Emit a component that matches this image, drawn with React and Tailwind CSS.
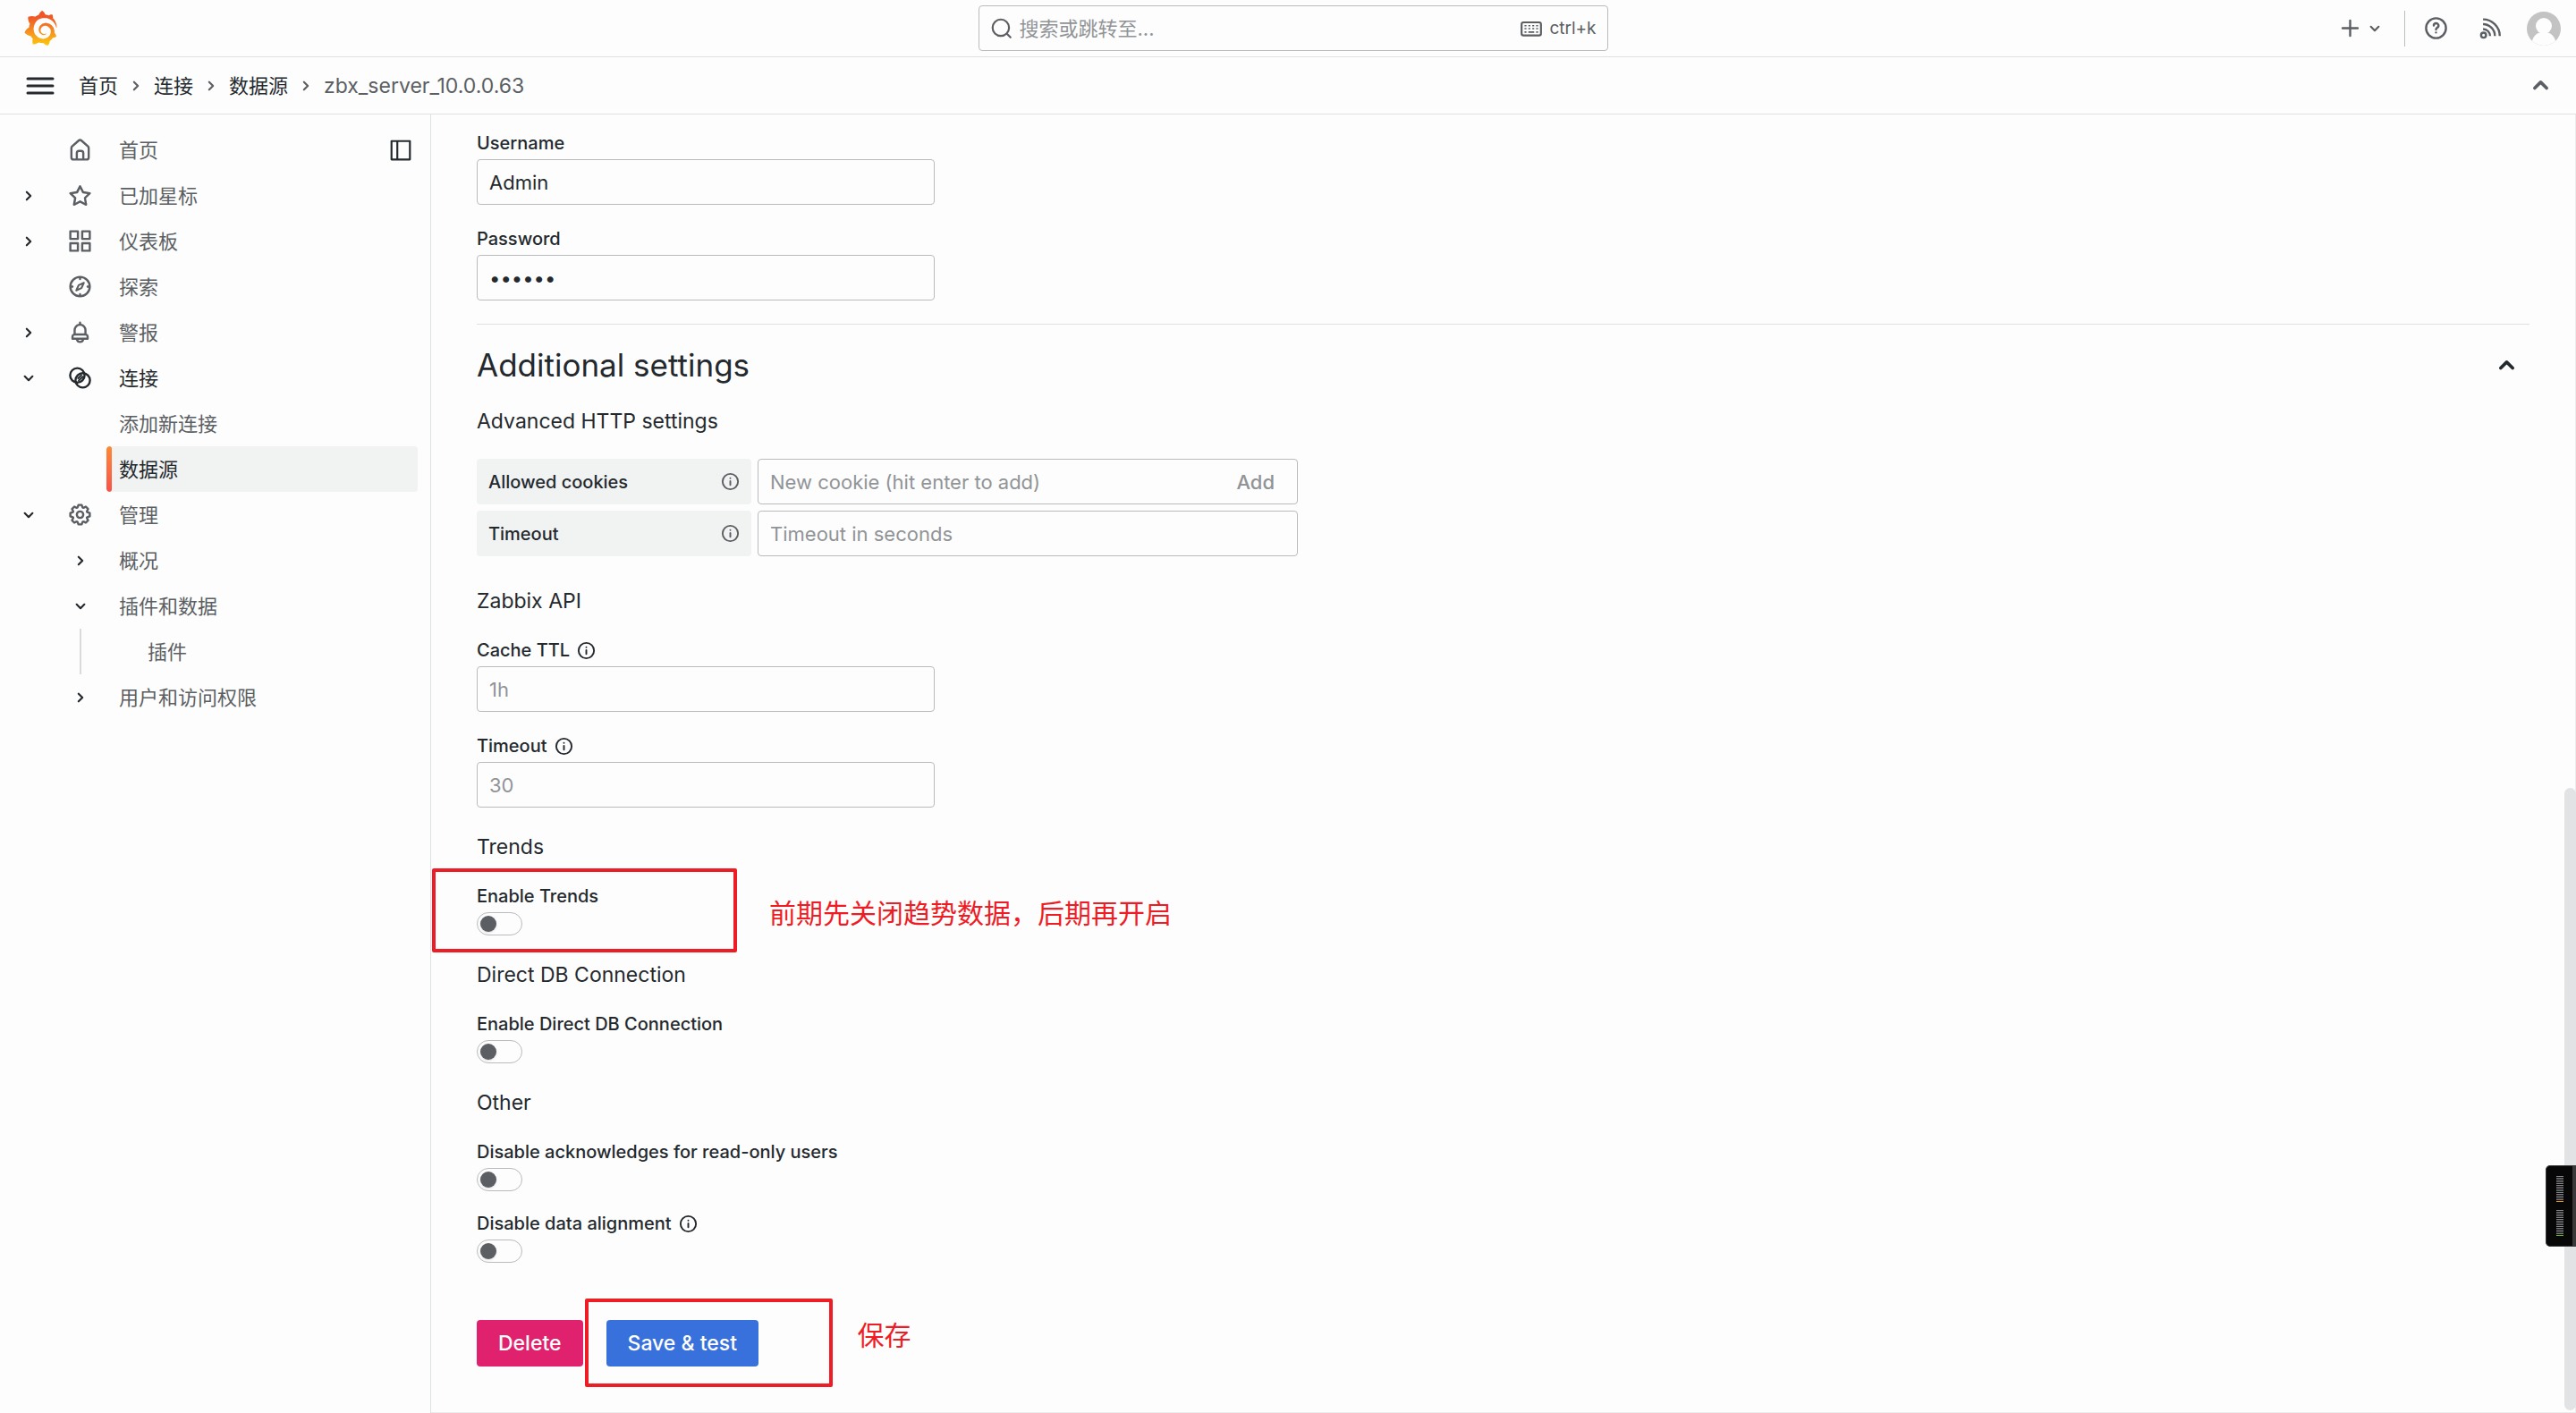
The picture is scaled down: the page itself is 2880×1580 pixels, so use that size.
import React from "react";
import { SiGrafana } from "react-icons/si";

const PATHS = {
  home: "M20,8h0L14,2.74a3,3,0,0,0-4,0L4,8a3,3,0,0,0-1,2.26V19a3,3,0,0,0,3,3H18a3,3,0,0,0,3-3V10.25A3,3,0,0,0,20,8ZM14,20H10V15a1,1,0,0,1,1-1h2a1,1,0,0,1,1,1Zm5-1a1,1,0,0,1-1,1H16V15a3,3,0,0,0-3-3H11a3,3,0,0,0-3,3v5H6a1,1,0,0,1-1-1V10.25a1,1,0,0,1,.34-.75l6-5.25a1,1,0,0,1,1.32,0l6,5.25a1,1,0,0,1,.34.75Z",
  star: "M22,9.67A1,1,0,0,0,21.14,9l-5.69-.83L12.9,3a1,1,0,0,0-1.8,0L8.55,8.16,2.86,9a1,1,0,0,0-.81.68,1,1,0,0,0,.25,1l4.13,4-1,5.68A1,1,0,0,0,6.9,21.44L12,18.77l5.1,2.67a.93.93,0,0,0,.46.12,1,1,0,0,0,.59-.19,1,1,0,0,0,.4-1l-1-5.68,4.13-4A1,1,0,0,0,22,9.67Zm-6.15,4a1,1,0,0,0-.29.88l.72,4.2-3.76-2a1.06,1.06,0,0,0-.94,0l-3.76,2,.72-4.2a1,1,0,0,0-.29-.88l-3-3,4.21-.61a1,1,0,0,0,.76-.55L12,5.7l1.88,3.82a1,1,0,0,0,.76.55l4.21.61Z",
  apps: "M10,13H3a1,1,0,0,0-1,1v7a1,1,0,0,0,1,1h7a1,1,0,0,0,1-1V14A1,1,0,0,0,10,13ZM9,20H4V15H9ZM21,2H14a1,1,0,0,0-1,1v7a1,1,0,0,0,1,1h7a1,1,0,0,0,1-1V3A1,1,0,0,0,21,2ZM20,9H15V4h5Zm1,4H14a1,1,0,0,0-1,1v7a1,1,0,0,0,1,1h7a1,1,0,0,0,1-1V14A1,1,0,0,0,21,13Zm-1,7H15V15h5ZM10,2H3A1,1,0,0,0,2,3v7a1,1,0,0,0,1,1h7a1,1,0,0,0,1-1V3A1,1,0,0,0,10,2ZM9,9H4V4H9Z",
  bell: "M18,13.18V10a6,6,0,0,0-5-5.91V3a1,1,0,0,0-2,0V4.09A6,6,0,0,0,6,10v3.18A3,3,0,0,0,4,16v2a1,1,0,0,0,1,1H8.14a4,4,0,0,0,7.72,0H19a1,1,0,0,0,1-1V16A3,3,0,0,0,18,13.18ZM8,10a4,4,0,0,1,8,0v3H8Zm4,10a2,2,0,0,1-1.72-1h3.44A2,2,0,0,1,12,20Zm6-3H6V16a1,1,0,0,1,1-1H17a1,1,0,0,1,1,1Z",
  cog: "M21.32,9.55l-1.89-.63.89-1.78A1,1,0,0,0,20.13,6L18,3.87a1,1,0,0,0-1.15-.19l-1.78.89-.63-1.89A1,1,0,0,0,13.5,2h-3a1,1,0,0,0-.95.68L8.92,4.57,7.14,3.68A1,1,0,0,0,6,3.87L3.87,6a1,1,0,0,0-.19,1.15l.89,1.78-1.89.63A1,1,0,0,0,2,10.5v3a1,1,0,0,0,.68.95l1.89.63-.89,1.78A1,1,0,0,0,3.87,18L6,20.13a1,1,0,0,0,1.15.19l1.78-.89.63,1.89a1,1,0,0,0,.95.68h3a1,1,0,0,0,.95-.68l.63-1.89,1.78.89A1,1,0,0,0,18,20.13L20.13,18a1,1,0,0,0,.19-1.15l-.89-1.78,1.89-.63A1,1,0,0,0,22,13.5v-3A1,1,0,0,0,21.32,9.55ZM20,12.78l-1.2.4A2,2,0,0,0,17.64,16l.57,1.14-1.1,1.1L16,17.64a2,2,0,0,0-2.79,1.16l-.4,1.2H11.22l-.4-1.2A2,2,0,0,0,8,17.64l-1.14.57-1.1-1.1L6.36,16A2,2,0,0,0,5.2,13.18L4,12.78V11.22l1.2-.4A2,2,0,0,0,6.36,8L5.79,6.89l1.1-1.1L8,6.36A2,2,0,0,0,10.82,5.2l.4-1.2h1.56l.4,1.2A2,2,0,0,0,16,6.36l1.14-.57,1.1,1.1L17.64,8a2,2,0,0,0,1.16,2.79l1.2.4ZM12,8a4,4,0,1,0,4,4A4,4,0,0,0,12,8Zm0,6a2,2,0,1,1,2-2A2,2,0,0,1,12,14Z",
};

function Solid({ name }) {
  return (
    <svg viewBox="0 0 24 24" className="size-[29px]" fill="currentColor" aria-hidden="true">
      <path d={PATHS[name]} />
    </svg>
  );
}

function Stroke({ children, className = "size-[29px]", width = 2 }) {
  return (
    <svg
      viewBox="0 0 24 24"
      className={className}
      fill="none"
      stroke="currentColor"
      strokeWidth={width}
      strokeLinecap="round"
      strokeLinejoin="round"
      aria-hidden="true"
    >
      {children}
    </svg>
  );
}

const ICONS = {
  home: <Solid name="home" />,
  star: <Solid name="star" />,
  apps: <Solid name="apps" />,
  bell: <Solid name="bell" />,
  cog: <Solid name="cog" />,
  compass: (
    <Stroke>
      <circle cx="12" cy="12" r="9" />
      <path d="M12 3.5v1.5M12 19v1.5M3.5 12H5M19 12h1.500" />
      <path d="M15.500 8.500l-4.800 2.200-2.200 4.800 4.800-2.200z" strokeWidth="1.700" />
    </Stroke>
  ),
  connections: (
    <Stroke>
      <circle cx="9.500" cy="9.700" r="6.700" />
      <circle cx="14.500" cy="14.300" r="6.700" />
      <path d="M10.200 12.400l3-2.800M10.800 14.400l3.800-3.400" strokeWidth="1.600" />
    </Stroke>
  ),
};

const CHEVRONS = {
  right: "M10 8l4 4-4 4",
  down: "M8 10l4 4 4-4",
};

function Chevron({ dir }) {
  return (
    <Stroke className="size-[26px]">
      <path d={CHEVRONS[dir]} />
    </Stroke>
  );
}

function ChevronUp() {
  return (
    <Stroke className="size-[29px]" width={3}>
      <path d="M6.500 14.500L12 9l5.500 5.500" />
    </Stroke>
  );
}

function Info() {
  return (
    <Stroke className="size-[23px] shrink-0">
      <circle cx="12" cy="12" r="9" />
      <path d="M12 11.500v4.500M12 8v.01" />
    </Stroke>
  );
}

function TopBar() {
  return (
    <header className="flex h-16 shrink-0 items-center border-b border-[#dfe0e1] pr-[17px] pl-7">
      <div className="flex flex-1 items-center">
        <a href="#home" aria-label="Grafana">
          <svg className="absolute size-0" aria-hidden="true">
            <defs>
              <linearGradient id="flame" x1="0" y1="1" x2="0" y2="0">
                <stop offset="0" stopColor="#fcc80b" />
                <stop offset="0.45" stopColor="#f58a22" />
                <stop offset="0.8" stopColor="#ef5a28" />
                <stop offset="1" stopColor="#ef5028" />
              </linearGradient>
            </defs>
          </svg>
          <SiGrafana fill="url(#flame)" className="size-[39px] -ml-0.5" />
        </a>
      </div>
      <div className="flex h-[51px] w-[704px] items-center gap-[7px] rounded border border-[#b9bbbc] px-3 focus-within:border-[#3871dc]">
        <svg viewBox="0 0 24 24" className="size-[26px] shrink-0" fill="none" stroke="currentColor" strokeWidth="2" strokeLinecap="round" aria-hidden="true">
          <circle cx="11" cy="11" r="8.500" />
          <path d="M17.500 17.500l3.500 3.500" />
        </svg>
        <input
          type="text"
          aria-label="搜索或跳转至..."
          placeholder="搜索或跳转至..."
          className="min-w-0 flex-1 bg-transparent outline-none placeholder:text-[#919497]"
        />
        <svg viewBox="0 0 24 24" className="size-[26px] shrink-0" fill="none" stroke="currentColor" strokeWidth="2" aria-hidden="true">
          <rect x="2" y="5.500" width="20" height="13.500" rx="2" />
          <path d="M5 9h2M9 9h2M13 9h2M17 9h2M5 12h2M9 12h2M13 12h2M17 12h2M5 15.500h2M9 15.500h6M17 15.500h2" strokeWidth="1.600" />
        </svg>
        <span className="text-[19px]">ctrl+k</span>
      </div>
      <div className="flex flex-1 items-center justify-end">
        <button type="button" aria-label="新建" className="flex items-center">
          <Stroke>
            <path d="M12 5v14M5 12h14" />
          </Stroke>
          <Chevron dir="down" />
        </button>
        <div className="mx-5 h-10 w-px bg-[#bbbdbe]" />
        <button type="button" aria-label="帮助" className="mr-8">
          <Stroke>
            <circle cx="12" cy="12" r="9.200" />
            <path d="M9.900 9.600a2.200 2.200 0 1 1 3.300 1.900c-.8.500-1.200.8-1.200 1.700M12 16v.01" />
          </Stroke>
        </button>
        <button type="button" aria-label="新闻" className="mr-[26px]">
          <Stroke>
            <circle cx="5.500" cy="18.500" r="2.300" />
            <g strokeLinecap="butt">
              <path d="M5 12.800c3.600 0 6.500 2.900 6.500 6.500M5 8.300c6 0 11 5 11 11M5 3.800c8.500 0 15.500 7 15.500 15.500" />
            </g>
          </Stroke>
        </button>
        <button type="button" aria-label="个人资料">
          <svg viewBox="0 0 38 38" className="size-[38px]" aria-hidden="true">
            <defs>
              <clipPath id="avatar">
                <circle cx="19" cy="19" r="19" />
              </clipPath>
            </defs>
            <g clipPath="url(#avatar)">
              <rect width="38" height="38" fill="#c3c3c3" />
              <circle cx="19" cy="16" r="9" fill="#fdfdfd" />
              <path d="M5 38C6 27 11 23 19 23s13 4 14 15z" fill="#fdfdfd" />
            </g>
          </svg>
        </button>
      </div>
    </header>
  );
}

function Breadcrumbs() {
  return (
    <div className="flex h-16 shrink-0 items-center border-b border-[#dfe0e1] pr-[25px] pl-7">
      <button type="button" aria-label="菜单" className="mr-[26px] text-[#24292e]">
        <svg viewBox="0 0 34 24" className="h-6 w-[34px]" stroke="currentColor" strokeWidth="3" strokeLinecap="round" aria-hidden="true">
          <path d="M3 4h28M3 12h28M3 20h28" />
        </svg>
      </button>
      <nav aria-label="breadcrumb" className="flex flex-1 items-center gap-[7px]">
        {["首页", "连接", "数据源"].map((t) => (
          <React.Fragment key={t}>
            <a href={"#" + t} className="text-[#24292e]">{t}</a>
            <Chevron dir="right" />
          </React.Fragment>
        ))}
        <span className="text-[23px]">zbx_server_10.0.0.63</span>
      </nav>
      <button type="button" aria-label="收起">
        <ChevronUp />
      </button>
    </div>
  );
}

const NAV = [
  { label: "首页", icon: "home", dock: true },
  { label: "已加星标", icon: "star", outer: "right" },
  { label: "仪表板", icon: "apps", outer: "right" },
  { label: "探索", icon: "compass" },
  { label: "警报", icon: "bell", outer: "right" },
  { label: "连接", icon: "connections", outer: "down", dark: true },
  { label: "添加新连接" },
  { label: "数据源", active: true, dark: true },
  { label: "管理", icon: "cog", outer: "down" },
  { label: "概况", inner: "right" },
  { label: "插件和数据", inner: "down" },
  { label: "插件", nested: true },
  { label: "用户和访问权限", inner: "right" },
];

function Toggle({ dir, label }) {
  return (
    <button type="button" aria-label={label} className="text-[#24292e]">
      <Chevron dir={dir} />
    </button>
  );
}

function NavItem({ item }) {
  return (
    <li className={item.dark ? "flex h-[51px] items-center text-[#24292e]" : "flex h-[51px] items-center"}>
      <div className="flex w-16 justify-center">
        {item.outer && <Toggle dir={item.outer} label={"展开 " + item.label} />}
      </div>
      <div className="flex h-full w-[51px] items-center justify-center">
        {item.icon && ICONS[item.icon]}
        {item.inner && <Toggle dir={item.inner} label={"展开 " + item.label} />}
        {item.nested && <div className="h-full w-0.5 bg-[#d9dadb]" />}
      </div>
      <div
        className={
          item.active
            ? "ml-1 flex h-full flex-1 items-center overflow-hidden rounded-[4px] bg-[#f1f3f3]"
            : "ml-1 flex h-full flex-1 items-center"
        }
      >
        {item.active ? (
          <div className="mr-2 h-full w-1.5 rounded-[3px] bg-linear-to-b from-[#ff8833] to-[#f8504a]" />
        ) : (
          <div className={item.nested ? "w-[46px]" : "w-3.5"} />
        )}
        <a href={"#" + item.label} className="flex-1">{item.label}</a>
        {item.dock && (
          <button type="button" aria-label="停靠菜单" className="mr-1.5 text-[#24292e]">
            <Stroke className="size-[26px]">
              <path d="M2.500 2.500h19v19h-19zM8.500 2.500v19" />
            </Stroke>
          </button>
        )}
      </div>
    </li>
  );
}

function Sidebar() {
  return (
    <nav className="w-[482px] shrink-0 border-r border-[#dfe0e1] pt-3.5 pr-3.5">
      <ul>
        {NAV.map((item) => (
          <NavItem key={item.label} item={item} />
        ))}
      </ul>
    </nav>
  );
}

function Label({ id, children, info }) {
  return (
    <div className="flex h-6 items-center gap-[7px]">
      <label htmlFor={id} className="text-[20px] leading-6 font-medium">{children}</label>
      {info && <Info />}
    </div>
  );
}

function TextField({ id, label, info, ...rest }) {
  return (
    <div className="flex flex-col gap-1.5">
      <Label id={id} info={info}>{label}</Label>
      <input
        id={id}
        className="h-[51px] w-[512px] rounded-[4px] border border-[#b9bbbc] bg-transparent px-[13px] outline-none placeholder:text-[#919497] focus:border-[#3871dc]"
        {...rest}
      />
    </div>
  );
}

function SwitchField({ id, label, info, children }) {
  return (
    <div className="relative flex flex-col gap-1.5">
      <Label id={id} info={info}>{label}</Label>
      <input
        id={id}
        type="checkbox"
        role="switch"
        className="h-[26px] w-[51px] appearance-none rounded-full border border-[#b9bbbc] p-[3px] before:block before:size-[18px] before:rounded-full before:bg-[#5b5f63] before:shadow-sm before:content-[''] checked:bg-[#3871dc] checked:before:ml-[25px] checked:before:bg-white"
      />
      {children}
    </div>
  );
}

function InlineRow({ id, label, placeholder, action }) {
  return (
    <div className="flex h-[51px] gap-[7px]">
      <div className="flex w-[307px] items-center justify-between rounded-[4px] bg-[#f1f3f3] pr-3 pl-[13px]">
        <label htmlFor={id} className="text-[20px] leading-6 font-medium">{label}</label>
        <span className="text-[#5b5f63]">
          <Info />
        </span>
      </div>
      <div className="flex w-[604px] items-center rounded-[4px] border border-[#b9bbbc] px-[13px] focus-within:border-[#3871dc]">
        <input id={id} placeholder={placeholder} className="min-w-0 flex-1 bg-transparent outline-none placeholder:text-[#919497]" />
        {action && <button type="button" className="px-3 font-medium text-[#919497]">{action}</button>}
      </div>
    </div>
  );
}

function Section({ title, children, tight }) {
  return (
    <section>
      <h4 className="text-[23px] leading-7">{title}</h4>
      <div className={tight ? "mt-[29px] flex flex-col gap-6" : "mt-[29px] flex flex-col gap-[26px]"}>{children}</div>
    </section>
  );
}

function Settings() {
  return (
    <main className="min-w-0 flex-1 border-r border-b border-[#ececed] pt-5 pr-[51px] pl-[51px] text-[#24292e]">
      <form onSubmit={(e) => e.preventDefault()}>
        <div className="flex flex-col gap-[26px]">
          <TextField id="username" label="Username" type="text" defaultValue="Admin" />
          <TextField id="password" label="Password" type="password" defaultValue="zabbix" autoComplete="off" />
        </div>
        <div className="mt-[26px] flex items-center justify-between border-t border-[#dfe0e1] pt-[25px] pr-[11px]">
          <h3 className="text-[35px] leading-10">Additional settings</h3>
          <button type="button" aria-label="Collapse additional settings">
            <ChevronUp />
          </button>
        </div>
        <h4 className="mt-[29px] text-[23px] leading-7">Advanced HTTP settings</h4>
        <div className="mt-7 flex flex-col gap-[7px]">
          <InlineRow id="cookies" label="Allowed cookies" placeholder="New cookie (hit enter to add)" action="Add" />
          <InlineRow id="http-timeout" label="Timeout" placeholder="Timeout in seconds" />
        </div>
        <div className="mt-9 flex flex-col gap-[30px]">
          <Section title="Zabbix API">
            <TextField id="ttl" label="Cache TTL" info placeholder="1h" />
            <TextField id="api-timeout" label="Timeout" info placeholder="30" />
          </Section>
          <Section title="Trends" tight>
            <SwitchField id="trends" label="Enable Trends">
              <div className="pointer-events-none absolute -top-[19px] -left-[50px] h-[94px] w-[341px] rounded-[2px] border-4 border-[#ee1c25]" />
              <p className="absolute top-[11px] left-[327px] text-[30px] leading-10 whitespace-nowrap text-[#ee1c25]">
                前期先关闭趋势数据，后期再开启
              </p>
            </SwitchField>
          </Section>
          <Section title="Direct DB Connection" tight>
            <SwitchField id="direct-db" label="Enable Direct DB Connection" />
          </Section>
          <Section title="Other" tight>
            <SwitchField id="ack" label="Disable acknowledges for read-only users" />
            <SwitchField id="align" label="Disable data alignment" info />
          </Section>
        </div>
        <div className="mt-16 flex gap-[26px] text-[23px] font-medium text-white">
          <button type="button" className="h-[52px] rounded-[4px] bg-[#e0226e] px-6">Delete</button>
          <div className="relative">
            <button type="submit" className="h-[52px] rounded-[4px] bg-[#3871dc] px-6">Save &amp; test</button>
            <div className="pointer-events-none absolute -top-6 -left-6 h-[99px] w-[277px] rounded-[2px] border-4 border-[#ee1c25]" />
            <p className="absolute -top-[3px] left-[281px] text-[30px] leading-10 font-normal whitespace-nowrap text-[#ee1c25]">保存</p>
          </div>
        </div>
      </form>
    </main>
  );
}

function Meter({ tip }) {
  return (
    <div className="flex w-2 flex-col gap-px">
      {Array.from({ length: 14 }, (_, i) => (
        <div key={i} className="h-px bg-[#85868a]" />
      ))}
      <div className={tip} />
    </div>
  );
}

function MonitorWidget() {
  return (
    <div className="absolute right-0 bottom-[186px] flex h-[91px] w-[34px] flex-col justify-center gap-[9px] rounded-l-[5px] border border-r-4 border-[#3a3a3a] bg-[#070707] pl-[11px]">
      <Meter tip="h-px bg-[#e8960f]" />
      <Meter tip="h-px bg-[#6bb52a]" />
    </div>
  );
}

export default function App() {
  return (
    <div className="relative flex min-h-screen flex-col bg-[#fdfdfd] font-['Inter','Noto_Sans_CJK_SC',sans-serif] text-[22px] leading-8 text-[#5b5f63]">
      <TopBar />
      <Breadcrumbs />
      <div className="flex flex-1">
        <Sidebar />
        <Settings />
      </div>
      <div className="absolute right-0 bottom-[3px] h-[696px] w-[13px] rounded-full bg-[#e1e3e5]" />
      <MonitorWidget />
    </div>
  );
}
